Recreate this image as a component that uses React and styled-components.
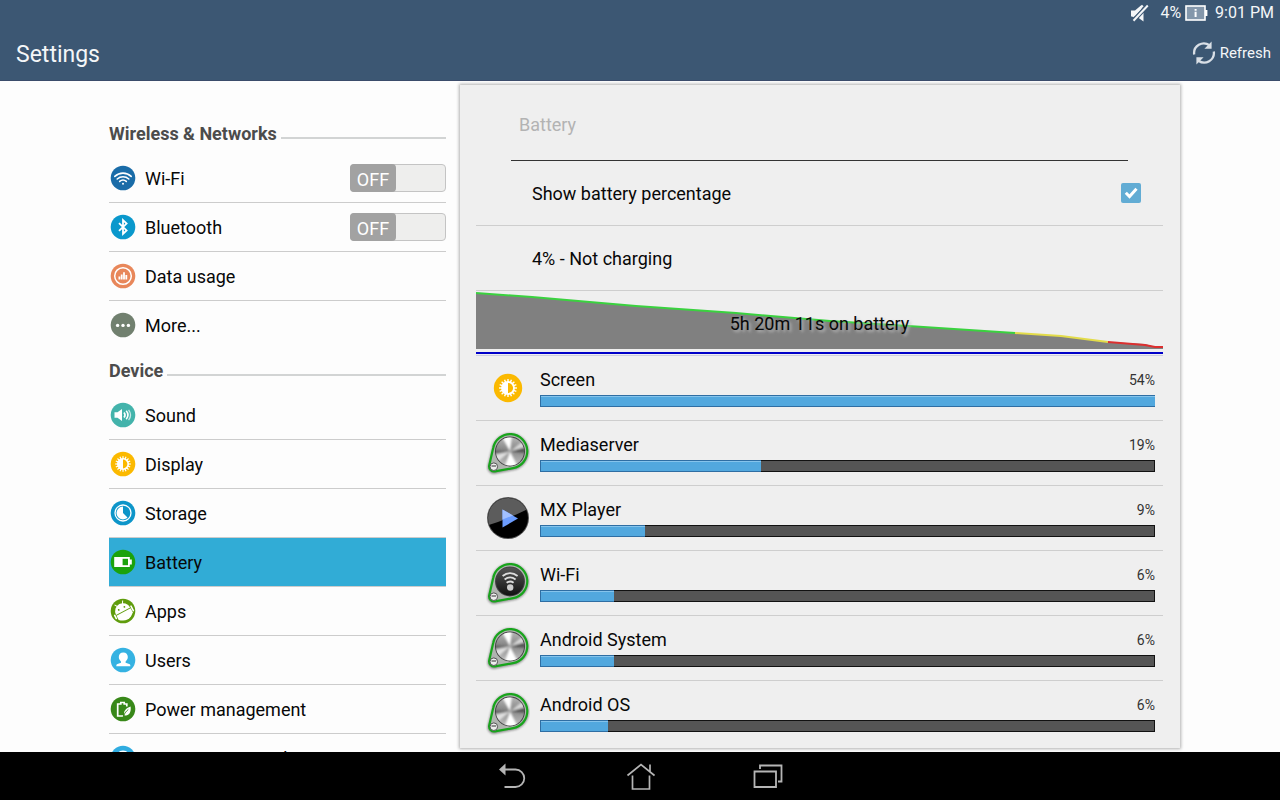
import React, { useState } from "react";
import styled, { createGlobalStyle } from "styled-components";

const wirelessItems = [
  { label: "Wi-Fi", icon: "wifi", hasSwitch: true },
  { label: "Bluetooth", icon: "bluetooth", hasSwitch: true },
  { label: "Data usage", icon: "data" },
  { label: "More...", icon: "more" },
];

const deviceItems = [
  { label: "Sound", icon: "sound" },
  { label: "Display", icon: "display" },
  { label: "Storage", icon: "storage" },
  { label: "Battery", icon: "battery" },
  { label: "Apps", icon: "apps" },
  { label: "Users", icon: "users" },
  { label: "Power management", icon: "power" },
  { label: "ASUS customized setting", icon: "custom" },
];

const usage = [
  { name: "Screen", percent: 54, fill: 100, icon: "screen" },
  { name: "Mediaserver", percent: 19, fill: 36, icon: "knob" },
  { name: "MX Player", percent: 9, fill: 17, icon: "player" },
  { name: "Wi-Fi", percent: 6, fill: 12, icon: "knobWifi" },
  { name: "Android System", percent: 6, fill: 12, icon: "knob" },
  { name: "Android OS", percent: 6, fill: 11, icon: "knob" },
];

const Sun = () => (
  <>
    {Array.from({ length: 16 }, (_, i) => (
      <rect key={i} x="12.4" y="5.2" width="1.2" height="3" fill="#fff" transform={`rotate(${i * 22.5} 13 13)`} />
    ))}
    <circle cx="13" cy="13" r="6" fill="#fff" />
    <path d="M13 8.6a4.4 4.4 0 0 1 0 8.8z" fill="#fbb900" />
  </>
);

const glyphs = {
  wifi: {
    color: "#1a6ca8",
    art: (
      <g fill="none" stroke="#fff" strokeWidth="1.6" strokeLinecap="round">
        <path d="M4.8 11.4c4.7-4.4 11.7-4.4 16.4 0" />
        <path d="M7.2 14c3.3-3 8.3-3 11.6 0" />
        <path d="M9.7 16.4c1.9-1.6 4.7-1.6 6.6 0" />
        <circle cx="13" cy="18.8" r="1" fill="#fff" stroke="none" />
      </g>
    ),
  },
  bluetooth: {
    color: "#0a98cc",
    art: <path d="M9 9.2l7.6 7.2-3.6 3.4V6.2l3.6 3.4L9 16.8" fill="none" stroke="#fff" strokeWidth="1.8" />,
  },
  data: {
    color: "#e8875a",
    art: (
      <>
        <circle cx="13" cy="13" r="8.3" fill="none" stroke="#fff" strokeWidth="1.5" />
        <path d="M8.5 16.5v-3h1.8v3zM10.8 16.5v-5h1.8v5zM13.1 16.5V9.2h1.8v7.3zM15.4 16.5v-4.6h1.8v4.6z" fill="#fff" />
      </>
    ),
  },
  more: {
    color: "#71806f",
    art: (
      <g fill="#fff">
        <circle cx="7.6" cy="13.4" r="1.7" />
        <circle cx="13" cy="13.4" r="1.7" />
        <circle cx="18.4" cy="13.4" r="1.7" />
      </g>
    ),
  },
  sound: {
    color: "#43b3ab",
    art: (
      <>
        <path d="M4.5 10.3h3L12 7v12l-4.5-3.3h-3z" fill="#fff" />
        <path d="M14 10.4c1.3 1.6 1.3 3.6 0 5.2M16.2 8.8c2.2 2.6 2.2 5.8 0 8.4" fill="none" stroke="#fff" strokeWidth="1.6" />
        <path d="M18.6 7.8c2.4 3.2 2.4 7.2 0 10.4" fill="none" stroke="#fff" strokeWidth="1.3" opacity="0.7" />
      </>
    ),
  },
  display: { color: "#fbb900", art: <Sun /> },
  storage: {
    color: "#0d95c9",
    art: (
      <>
        <circle cx="13" cy="13" r="8" fill="none" stroke="#fff" strokeWidth="1.3" />
        <path d="M13 13V6.6A6.4 6.4 0 1 0 17.5 17.5z" fill="#fff" />
      </>
    ),
  },
  battery: {
    color: "#1ba20c",
    art: (
      <>
        <path d="M4.2 8h15.6v2.6h2v4.8h-2V18H4.2z" fill="#fff" />
        <path d="M12.6 9.8H18v6.4h-5.4z" fill="#1ba20c" />
      </>
    ),
  },
  apps: {
    color: "#5f9c0c",
    art: (
      <g transform="rotate(-28 13 13)">
        <path d="M5 13.2a8 8 0 0 1 16 0z" fill="#fff" />
        <path d="M8.4 3.6l1.8 3M17.6 3.6l-1.8 3" stroke="#fff" strokeWidth="1" />
        <circle cx="9.8" cy="10" r="0.9" fill="#5f9c0c" />
        <circle cx="16.2" cy="10" r="0.9" fill="#5f9c0c" />
        <path d="M5 14.2h16v4.6a10.5 10.5 0 0 1-16 0z" fill="#fff" />
        <path d="M22.3 12.5v5M3.6 13v3.5" stroke="#fff" strokeWidth="1.6" strokeLinecap="round" />
      </g>
    ),
  },
  users: {
    color: "#35b2e2",
    art: (
      <path
        d="M13.3 5.5c2.9 0 4.5 2 4.5 4.6 0 2-1 3.5-2.2 4.4v1.2l3.6 1.3c.9.4 1.2 1 1.2 2.2H6.3c0-1.2.3-1.8 1.2-2.2l3.5-1.3v-1.2c-1.2-.9-2.2-2.4-2.2-4.4 0-2.6 1.6-4.6 4.5-4.6z"
        fill="#fff"
      />
    ),
  },
  power: {
    color: "#388819",
    art: (
      <>
        <path d="M16.8 10.5V8h-2.6V6.5h-3.4V8H7.7v12h5.5" fill="none" stroke="#fff" strokeWidth="1.7" />
        <path d="M20.6 10.4c.7 5.6-1.1 9.2-6.1 9.2-1.5-4.4 1.2-7.4 6.1-9.2z" fill="#fff" />
        <path d="M13 21.5c1-3.5 2.8-6 5.3-8" stroke="#388819" strokeWidth="0.9" fill="none" />
      </>
    ),
  },
  custom: {
    color: "#30ace0",
    art: <circle cx="13" cy="13" r="6.5" fill="none" stroke="#fff" strokeWidth="2" />,
  },
};

const RoundIcon = ({ name, size = 26 }) => (
  <svg width={size} height={size} viewBox="0 0 26 26" aria-hidden="true">
    <circle cx="13" cy="13" r="12.3" fill={glyphs[name].color} />
    {glyphs[name].art}
  </svg>
);

const KnobIcon = ({ wifi }) => (
  <svg width="44" height="46" viewBox="0 -1 44 46" aria-hidden="true">
    <defs>
      <linearGradient id="metal" x1="0" y1="0" x2="0" y2="1">
        <stop offset="0" stopColor="#b4b4b4" />
        <stop offset="0.45" stopColor="#868686" />
        <stop offset="1" stopColor="#c0c0c0" />
      </linearGradient>
      <linearGradient id="dark" x1="0" y1="0" x2="0" y2="1">
        <stop offset="0" stopColor="#555" />
        <stop offset="1" stopColor="#111" />
      </linearGradient>
      <filter id="soft" x="-30%" y="-30%" width="160%" height="160%">
        <feGaussianBlur stdDeviation="1.3" />
      </filter>
      <clipPath id="disc">
        <circle cx="24" cy="20.5" r="14" />
      </clipPath>
    </defs>
    <path d="M7.2 18A17.2 17.2 0 1 1 27 37.8L9 41.3A5 5 0 0 1 3 35.4z" fill="#777" stroke="#666" strokeWidth="3" opacity="0.7" filter="url(#soft)" />
    <path d="M7.2 17A17.2 17.2 0 1 1 27 37.2L9 40.3A5 5 0 0 1 3.2 34.4z" fill="#b0b4b0" stroke="#17a51b" strokeWidth="2.2" />
    <circle cx="24" cy="20.5" r="15" fill="#444" />
    {wifi ? (
      <>
        <circle cx="24" cy="20.5" r="14" fill="url(#dark)" />
        <g fill="none" stroke="#ddd" strokeWidth="1.9">
          <path d="M16.6 15c4.6-3.6 10.4-3.6 15 0" />
          <path d="M18.6 18.5c3.4-2.6 7.6-2.6 11 0" />
          <path d="M20.6 21.8c2.2-1.6 4.8-1.6 7 0" />
        </g>
        <circle cx="24.2" cy="26.5" r="3.2" fill="#ccc" />
      </>
    ) : (
      <>
        <circle cx="24" cy="20.5" r="14" fill="url(#metal)" />
        <g clipPath="url(#disc)">
          <g filter="url(#soft)">
            <path d="M24 20.5L15 4h11z" fill="#fff" />
            <path d="M24 20.5L18 38h15z" fill="#fff" />
            <path d="M24 20.5L8 24v10z" fill="#e0e0e0" />
            <path d="M24 20.5L42 6v9z" fill="#d8d8d8" />
            <path d="M24 20.5L42 16v6z" fill="#555" />
            <path d="M24 20.5L6 19v4z" fill="#666" />
          </g>
        </g>
      </>
    )}
    <circle cx="7.8" cy="35.7" r="3.8" fill="#eee" stroke="#555" strokeWidth="1" />
    <path d="M5.5 35h4.6" stroke="#666" strokeWidth="1.4" />
  </svg>
);

const PlayerIcon = () => (
  <svg width="44" height="44" viewBox="0 0 44 44" aria-hidden="true">
    <defs>
      <clipPath id="playerDisc">
        <circle cx="22" cy="22" r="20" />
      </clipPath>
    </defs>
    <circle cx="22" cy="22" r="21" fill="#555" />
    <circle cx="22" cy="22" r="20" fill="#000" />
    <path d="M0 0h44v12Q22 23 0 30z" fill="#5c5c5c" clipPath="url(#playerDisc)" />
    <path d="M16.5 13.5L32 22.5 16.5 31.5z" fill="#6c9dff" />
    <path d="M16.5 13.5L27 19.4l-10.5 4.2z" fill="#a2c0ff" />
  </svg>
);

const UsageIcon = ({ name }) => {
  if (name === "screen") return <RoundIcon name="display" size={30} />;
  if (name === "player") return <PlayerIcon />;
  return <KnobIcon wifi={name === "knobWifi"} />;
};

const BatteryChart = () => (
  <svg width="100%" height="64" viewBox="0 0 687 64" preserveAspectRatio="none" aria-hidden="true">
    <path d="M0 2L56 6 160 15 260 22 354 30 417 34 539 42 585 45 632 51 669 53 679 56H687V58H0z" fill="#808080" />
    <g fill="none" strokeWidth="2">
      <path d="M0 2L56 6 160 15 260 22 354 30 417 34 539 42" stroke="#3ad23f" />
      <path d="M539 42L585 45 632 51" stroke="#e3dc4a" />
      <path d="M632 51L669 54 679 56H687" stroke="#dc2f2f" />
    </g>
    <path d="M0 61h687v2H0z" fill="#0000c8" />
  </svg>
);

const App = () => {
  const [on, setOn] = useState({});
  const [selected, setSelected] = useState("Battery");
  const [showPercent, setShowPercent] = useState(true);

  const renderItem = (item) => (
    <MenuRow key={item.label} $active={item.label === selected}>
      <MenuButton type="button" onClick={() => setSelected(item.label)}>
        <RoundIcon name={item.icon} />
        {item.label}
      </MenuButton>
      {item.hasSwitch && (
        <Switch
          type="button"
          role="switch"
          aria-label={item.label}
          aria-checked={!!on[item.label]}
          onClick={() => setOn({ ...on, [item.label]: !on[item.label] })}
        >
          <Thumb $on={on[item.label]}>{on[item.label] ? "ON" : "OFF"}</Thumb>
        </Switch>
      )}
    </MenuRow>
  );

  return (
    <Screen>
      <GlobalStyle />
      <Header>
        <StatusBar>
          <svg width="19" height="18" viewBox="0 0 19 18" aria-hidden="true">
            <path d="M1 6.5h4L11.5 1v5L5.5 12.5H1z" fill="#f4f6f8" />
            <path d="M13.5 8v9.5L8 13.5z" fill="#f4f6f8" />
            <path d="M18 1L3 17" stroke="#3c5773" strokeWidth="4.4" />
            <path d="M17.8 1.5L3.5 16.8" stroke="#f4f6f8" strokeWidth="2" />
            <path d="M12.8 1.5L2.5 12.5" stroke="#f4f6f8" strokeWidth="2.2" />
          </svg>
          <Level>
            4%
            <svg width="23" height="16" viewBox="0 0 23 16" aria-hidden="true">
              <rect x="1" y="1" width="19" height="14" fill="#8497ab" stroke="#fff" strokeWidth="1.6" />
              <rect x="20" y="5" width="2.4" height="6" fill="#fff" />
              <path d="M9.6 4h2v1.7h-2zM9.6 6.7h2V12h-2z" fill="#fff" />
            </svg>
          </Level>
          <span>9:01 PM</span>
        </StatusBar>
        <TitleBar>
          <Title>Settings</Title>
          <RefreshButton type="button">
            <svg width="24" height="24" viewBox="0 0 24 24" aria-hidden="true">
              <g fill="none" stroke="#d9dfe6" strokeWidth="2.3">
                <path d="M2.2 13.5A9.7 9.7 0 0 1 17.5 4.3" />
                <path d="M21.8 10.5A9.7 9.7 0 0 1 6.5 19.7" />
              </g>
              <path d="M19.6 0.5v7.2h-7.2zM4.4 23.5v-7.2h7.2z" fill="#d9dfe6" />
            </svg>
            Refresh
          </RefreshButton>
        </TitleBar>
      </Header>
      <Content>
        <Sidebar>
          <SectionTitle>Wireless &amp; Networks</SectionTitle>
          <Menu>{wirelessItems.map(renderItem)}</Menu>
          <SectionTitle>Device</SectionTitle>
          <Menu>{deviceItems.map(renderItem)}</Menu>
        </Sidebar>
        <Panel>
          <PanelTitle>Battery</PanelTitle>
          <OptionRow>
            <label htmlFor="show-percent">Show battery percentage</label>
            <CheckWrap>
              <Checkbox
                id="show-percent"
                type="checkbox"
                checked={showPercent}
                onChange={(e) => setShowPercent(e.target.checked)}
              />
              {showPercent && (
                <svg width="20" height="20" viewBox="0 0 20 20" aria-hidden="true">
                  <path d="M4.8 9.8l3.7 3.7L15.5 5.8" fill="none" stroke="#fff" strokeWidth="3" />
                </svg>
              )}
            </CheckWrap>
          </OptionRow>
          <OptionRow>4% - Not charging</OptionRow>
          <ChartRow>
            <BatteryChart />
            <ChartLabel>5h 20m 11s on battery</ChartLabel>
          </ChartRow>
          <UsageList>
            {usage.map((item) => (
              <UsageRow key={item.name}>
                <UsageIcon name={item.icon} />
                <UsageBody>
                  <UsageHead>
                    {item.name}
                    <Percent>{item.percent}%</Percent>
                  </UsageHead>
                  <Bar>
                    <BarFill style={{ width: `${item.fill}%` }} />
                  </Bar>
                </UsageBody>
              </UsageRow>
            ))}
          </UsageList>
        </Panel>
      </Content>
      <NavBar>
        <NavButton type="button" aria-label="Back">
          <svg width="30" height="30" viewBox="-1 -1 30 30">
            <path d="M7 7.5h10.5a8.7 8.7 0 0 1 0 17.5H6.5" fill="none" stroke="#b5b5b5" strokeWidth="1.8" />
            <path d="M1 7.5L7.5 1.5v12z" fill="#b5b5b5" />
          </svg>
        </NavButton>
        <NavButton type="button" aria-label="Home">
          <svg width="30" height="30" viewBox="-1 -1 30 30">
            <path d="M1.5 13.5L15 2.5l13.5 11M24 9.5V2.5M6.5 13.5V27h17V13.5" fill="none" stroke="#b5b5b5" strokeWidth="1.7" />
          </svg>
        </NavButton>
        <NavButton type="button" aria-label="Recent apps">
          <svg width="30" height="30" viewBox="0 -1 30 30">
            <path d="M1.5 9.5H23V25H1.5zM7 7V3.5h21.5v16h-3.5" fill="none" stroke="#b5b5b5" strokeWidth="1.8" />
          </svg>
        </NavButton>
      </NavBar>
    </Screen>
  );
};

const GlobalStyle = createGlobalStyle`
* {
  box-sizing: border-box;
}
body {
  margin: 0;
  font-family: Roboto, "Liberation Sans", sans-serif;
  font-size: 18px;
  color: #080808;
}
button {
  border: 0;
  padding: 0;
  background: none;
  font: inherit;
  color: inherit;
  cursor: pointer;
}
svg {
  display: block;
  flex: none;
}
`;
const Screen = styled.div`
  display: flex;
  flex-direction: column;
  height: 100vh;
  background: #fdfdfd;
  overflow: hidden;
`;
const Header = styled.header`
  flex: none;
  background: #3c5773;
  border-bottom: 1px solid #3b4c6b;
  color: #f4f6f8;
`;
const StatusBar = styled.div`
  display: flex;
  align-items: center;
  justify-content: flex-end;
  gap: 7px;
  height: 25px;
  padding-right: 6px;
  font-size: 16px;
`;
const Level = styled.span`
  display: flex;
  align-items: center;
  gap: 4px;
  margin-left: 4px;
`;
const TitleBar = styled.div`
  display: flex;
  align-items: center;
  justify-content: space-between;
  height: 55px;
  padding: 0 9px 0 16px;
`;
const Title = styled.h1`
  margin: 0;
  padding-top: 4px;
  font-size: 23px;
  font-weight: 400;
`;
const RefreshButton = styled.button`
  display: flex;
  align-items: center;
  gap: 4px;
  font-size: 15px;
`;
const Content = styled.main`
  flex: 1;
  min-height: 0;
  display: grid;
  grid-template-columns: 337fr 720fr;
  align-items: start;
  gap: 14px;
  padding: 4px 100px 0 109px;
`;
const Sidebar = styled.nav`
  padding-top: 28px;
`;
const SectionTitle = styled.h2`
  display: flex;
  align-items: center;
  gap: 4px;
  height: 41px;
  margin: 0;
  font-size: 18px;
  font-weight: 700;
  color: #4c4c4c;
  &::after {
    content: "";
    flex: 1;
    height: 2px;
    margin-top: 9px;
    background: #d2d4d4;
  }
`;
const Menu = styled.ul`
  margin: 0;
  padding: 0;
  list-style: none;
`;
const MenuRow = styled.li`
  display: flex;
  align-items: center;
  height: 49px;
  border-bottom: 1px solid #cccccc;
  background: ${(props) => (props.$active ? "#31acd6" : "transparent")};
  &:last-child {
    border-color: transparent;
  }
`;
const MenuButton = styled.button`
  flex: 1;
  display: flex;
  align-items: center;
  gap: 9px;
  height: 100%;
  padding-left: 1px;
  text-align: left;
`;
const Switch = styled.button`
  width: 96px;
  height: 28px;
  border: 1px solid #c4c4c4;
  border-radius: 4px;
  background: #eeeeed;
`;
const Thumb = styled.span`
  display: block;
  width: 46px;
  height: 28px;
  margin: -1px;
  margin-left: ${(props) => (props.$on ? "49px" : "-1px")};
  border-radius: 4px;
  background: #a2a2a2;
  color: #fff;
  line-height: 32px;
`;
const Panel = styled.section`
  padding: 0 17px 2px 16px;
  background: #efefef;
  box-shadow: 0 0 3px 1px rgba(0, 0, 0, 0.3);
`;
const PanelTitle = styled.h2`
  display: flex;
  align-items: center;
  height: 76px;
  margin: 0 35px;
  padding: 4px 8px 0;
  border-bottom: 1px solid #333;
  color: #b3b3b3;
  font-size: 18px;
  font-weight: 400;
`;
const OptionRow = styled.div`
  display: flex;
  align-items: center;
  justify-content: space-between;
  height: 65px;
  padding: 0 22px 0 56px;
  border-bottom: 1px solid #cecece;
`;
const CheckWrap = styled.span`
  position: relative;
  svg {
    position: absolute;
    inset: 0;
    pointer-events: none;
  }
`;
const Checkbox = styled.input`
  appearance: none;
  display: block;
  width: 20px;
  height: 20px;
  margin: 0;
  border-radius: 2px;
  background: ${(props) => (props.checked ? "#62acd4" : "#ccc")};
`;
const ChartRow = styled.div`
  position: relative;
  border-bottom: 1px solid #cdcde0;
`;
const ChartLabel = styled.div`
  position: absolute;
  inset: 0;
  display: flex;
  align-items: center;
  justify-content: center;
  text-shadow: 2px 2px 3px rgba(190, 190, 190, 0.9);
`;
const UsageList = styled.ul`
  margin: 0;
  padding: 0;
  list-style: none;
`;
const UsageRow = styled.li`
  display: grid;
  grid-template-columns: 64px 1fr;
  align-items: center;
  height: 65px;
  padding-right: 8px;
  border-bottom: 1px solid #cecece;
  > svg {
    justify-self: center;
  }
  &:last-child {
    border-color: transparent;
  }
`;
const UsageBody = styled.div`
  display: grid;
  gap: 3px;
  padding-bottom: 2px;
`;
const UsageHead = styled.div`
  display: flex;
  justify-content: space-between;
  line-height: 24px;
`;
const Percent = styled.span`
  padding-top: 1px;
  font-size: 14px;
  line-height: 23px;
  color: #333;
`;
const Bar = styled.div`
  height: 12px;
  background: #555;
  box-shadow: inset 0 0 0 1px #111;
`;
const BarFill = styled.div`
  height: 12px;
  border: 1px solid #2f6ea3;
  border-right-width: 0;
  background: #52a8de;
  box-shadow: inset 0 1px #85c4ec;
`;
const NavBar = styled.footer`
  flex: none;
  display: flex;
  justify-content: center;
  height: 48px;
  background: #000;
`;
const NavButton = styled.button`
  display: flex;
  align-items: center;
  justify-content: center;
  width: 128px;
`;
export default App;
